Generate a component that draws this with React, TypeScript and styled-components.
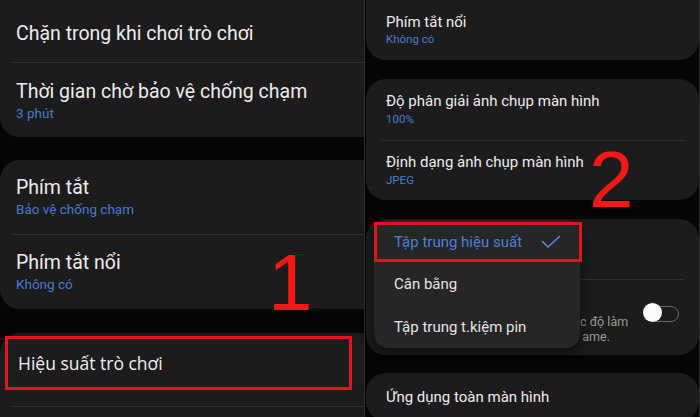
import React from 'react';
import styled, { createGlobalStyle } from 'styled-components';

const GlobalStyle = createGlobalStyle`
  html, body {
    margin: 0;
    padding: 0;
    background: #050505;
  }
  body {
    font-family: Roboto, "Noto Sans", "Liberation Sans", sans-serif;
  }
`;

const Screen = styled.div`
  position: relative;
  display: flex;
  width: 700px;
  height: 417px;
  overflow: hidden;
  background: #050505;
`;

const LeftPane = styled.div`
  position: relative;
  width: 364px;
  flex: none;
  overflow: hidden;
  display: flex;
  flex-direction: column;
`;

const PaneSplit = styled.div`
  width: 1px;
  flex: none;
  background: #2b2b2b;
`;

const RightPane = styled.div`
  position: relative;
  flex: 1;
  display: flex;
  flex-direction: column;
  padding-left: 1px;
  border-right: 1px solid #2b2b2b;
`;

const Card = styled.div<{ $cutTop?: boolean; $gap?: number; $wide?: boolean }>`
  flex: none;
  background: #1c1c1c;
  border-radius: 20px;
  ${(p) => (p.$cutTop ? 'border-top-left-radius: 0; border-top-right-radius: 0;' : '')}
  margin-top: ${(p) => p.$gap ?? 0}px;
  ${(p) => (p.$wide ? 'margin-right: -30px;' : '')}
  display: flex;
  flex-direction: column;
`;

const Row = styled.div<{ $h: number; $pad?: number; $drop?: number }>`
  height: ${(p) => p.$h}px;
  flex: none;
  display: flex;
  flex-direction: column;
  justify-content: center;
  padding-left: ${(p) => p.$pad ?? 16}px;
  padding-top: ${(p) => p.$drop ?? 0}px;
  box-sizing: border-box;
`;

const Title = styled.div<{ $size?: number }>`
  color: #ececec;
  font-size: ${(p) => p.$size ?? 19.5}px;
  line-height: 1.22;
  white-space: nowrap;
`;

const Sub = styled.div<{ $size?: number }>`
  color: #4a7acc;
  font-size: ${(p) => p.$size ?? 13.5}px;
  line-height: 1.3;
  margin-top: 1px;
  white-space: nowrap;
`;

const Divider = styled.div<{ $inset?: number }>`
  height: 1px;
  flex: none;
  background: #303030;
  margin-left: ${(p) => p.$inset ?? 12}px;
  margin-right: 14px;
`;

const Highlight = styled.div`
  height: 54px;
  margin: 3px 42px 0 5px;
  border: 3px solid #e3141b;
  box-sizing: border-box;
  display: flex;
  align-items: center;
  padding-left: 10px;
  color: #efefef;
  font-family: "Open Sans", "Noto Sans", sans-serif;
  font-size: 17.5px;
`;

const Spacer = styled.div<{ $h: number }>`
  height: ${(p) => p.$h}px;
  flex: none;
`;

const SettingRow = styled.div`
  height: 75px;
  display: flex;
  align-items: center;
  justify-content: flex-end;
  padding-right: 20px;
  gap: 20px;
`;

const Desc = styled.div`
  width: 47px;
  color: #9b9b9b;
  font-size: 12.5px;
  line-height: 15px;
  padding-top: 22px;
`;

const DescLine = styled.div<{ $trim?: number }>`
  text-align: right;
  white-space: nowrap;
  margin-right: ${(p) => p.$trim ?? 0}px;
`;

const Toggle = styled.div`
  position: relative;
  width: 30px;
  height: 14px;
  border: 1.5px solid #6a6a6a;
  border-radius: 9px;
  margin-top: -8px;
  flex: none;
`;

const Knob = styled.div`
  position: absolute;
  left: -5px;
  top: -4px;
  width: 19px;
  height: 19px;
  border-radius: 50%;
  background: #fafafa;
`;

const Popup = styled.div`
  position: absolute;
  left: 9px;
  top: 220px;
  width: 206px;
  height: 128px;
  background: #262626;
  border-radius: 14px;
  box-shadow: 0 4px 14px rgba(0, 0, 0, 0.6);
  display: flex;
  flex-direction: column;
  padding-top: 2px;
  box-sizing: border-box;
`;

const Option = styled.div<{ $active?: boolean; $h: number }>`
  height: ${(p) => p.$h}px;
  display: flex;
  align-items: center;
  justify-content: space-between;
  padding: 0 18px 0 20px;
  color: ${(p) => (p.$active ? '#4d80d6' : '#e4e4e4')};
  font-size: 15px;
  box-sizing: border-box;
  ${(p) => (p.$active ? 'border: 3px solid #e3141b; margin-right: -2px; padding-left: 17px;' : '')}
`;

const Mark = styled.span<{ $left: number; $top: number }>`
  position: absolute;
  left: ${(p) => p.$left}px;
  top: ${(p) => p.$top}px;
  color: #f21818;
  font-family: "Liberation Sans", Arial, sans-serif;
  font-size: 80px;
  line-height: 1;
  pointer-events: none;
`;

const Check = () => (
  <svg width="20" height="14" viewBox="0 0 20 14" fill="none">
    <polyline points="1.5,6.5 7,12 18.5,1.5" stroke="#5a88d6" strokeWidth="1.6" strokeLinecap="round" strokeLinejoin="round" />
  </svg>
);

export default function App() {
  return (
    <>
      <GlobalStyle />
      <Screen>
        <LeftPane>
          <Card $cutTop $wide>
            <Row $h={62} $drop={5}>
              <Title>Chặn trong khi chơi trò chơi</Title>
            </Row>
            <Divider />
            <Row $h={74} $drop={3}>
              <Title>Thời gian chờ bảo vệ chống chạm</Title>
              <Sub>3 phút</Sub>
            </Row>
          </Card>
          <Card $gap={23} $wide>
            <Row $h={74} $drop={1}>
              <Title>Phím tắt</Title>
              <Sub>Bảo vệ chống chạm</Sub>
            </Row>
            <Divider />
            <Row $h={74} $drop={1}>
              <Title>Phím tắt nổi</Title>
              <Sub>Không có</Sub>
            </Row>
          </Card>
          <Card $gap={24} $wide>
            <Highlight>Hiệu suất trò chơi</Highlight>
            <Spacer $h={16} />
            <Divider />
            <Spacer $h={30} />
          </Card>
          <Mark $left={268} $top={243}>1</Mark>
        </LeftPane>
        <PaneSplit />
        <RightPane>
          <Card $cutTop>
            <Row $h={60} $pad={20}>
              <Title $size={15}>Phím tắt nổi</Title>
              <Sub $size={11.5}>Không có</Sub>
            </Row>
          </Card>
          <Card $gap={19}>
            <Row $h={61} $pad={20}>
              <Title $size={15}>Độ phân giải ảnh chụp màn hình</Title>
              <Sub $size={11.5}>100%</Sub>
            </Row>
            <Divider $inset={16} />
            <Row $h={59} $pad={20}>
              <Title $size={15}>Định dạng ảnh chụp màn hình</Title>
              <Sub $size={11.5}>JPEG</Sub>
            </Row>
          </Card>
          <Card $gap={19}>
            <Spacer $h={60} />
            <Divider $inset={214} />
            <SettingRow>
              <Desc>
                <DescLine>c độ làm</DescLine>
                <DescLine $trim={17}>ame.</DescLine>
              </Desc>
              <Toggle>
                <Knob />
              </Toggle>
            </SettingRow>
          </Card>
          <Card $gap={18}>
            <Row $h={48} $pad={20}>
              <Title $size={15}>Ứng dụng toàn màn hình</Title>
            </Row>
          </Card>
          <Popup>
            <Option $active $h={40}>
              Tập trung hiệu suất
              <Check />
            </Option>
            <Option $h={43}>Cân bằng</Option>
            <Option $h={43}>Tập trung t.kiệm pin</Option>
          </Popup>
          <Mark $left={224} $top={140}>2</Mark>
        </RightPane>
      </Screen>
    </>
  );
}
